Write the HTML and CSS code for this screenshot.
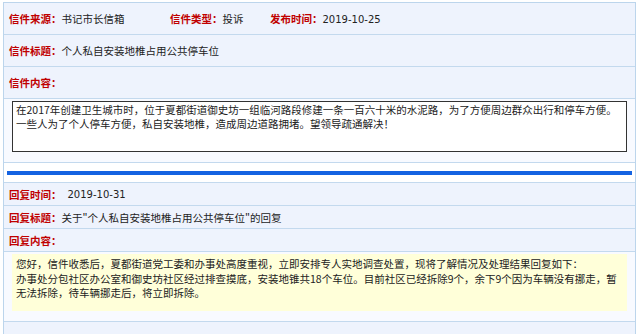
FILE: index.html
```html
<!DOCTYPE html>
<html lang="zh-CN">
<head>
    <meta charset="UTF-8">
    <meta name="viewport" content="width=device-width, initial-scale=1.0">
    <title>信件详情</title>
    <link rel="stylesheet" href="styles.css">
</head>
<body>
    <div class="letter">
        <div class="row row-head">
            <div class="field field-source"><span class="label">信件来源：</span>书记市长信箱</div>
            <div class="field field-type"><span class="label">信件类型：</span>投诉</div>
            <div class="field"><span class="label">发布时间：</span><span class="num">2019-10-25</span></div>
        </div>
        <div class="row row-head">
            <span class="label">信件标题：</span>个人私自安装地椎占用公共停车位
        </div>
        <div class="row row-head">
            <span class="label">信件内容：</span>
        </div>
        <div class="row row-body">
            <div class="content-box">在2017年创建卫生城市时，位于夏都街道御史坊一组临河路段修建一条一百六十米的水泥路，为了方便周边群众出行和停车方便。<br>一些人为了个人停车方便，私自安装地椎，造成周边道路拥堵。望领导疏通解决！</div>
        </div>
        <div class="divider"><div class="bar"></div></div>
        <div class="row row-reply">
            <span class="label">回复时间：</span><span class="num reply-date">2019-10-31</span>
        </div>
        <div class="row row-reply">
            <span class="label">回复标题：</span>关于"个人私自安装地椎占用公共停车位"的回复
        </div>
        <div class="row row-reply">
            <span class="label">回复内容：</span>
        </div>
        <div class="row row-body">
            <div class="reply-box">您好，信件收悉后，夏都街道党工委和办事处高度重视，立即安排专人实地调查处置，现将了解情况及处理结果回复如下：<br>办事处分包社区办公室和御史坊社区经过排查摸底，安装地锥共18个车位。目前社区已经拆除9个，余下9个因为车辆没有挪走，暂<br>无法拆除，待车辆挪走后，将立即拆除。</div>
        </div>
        <div class="row row-foot"></div>
    </div>
</body>
</html>
```

FILE: styles.css
```css
body {
    margin: 0;
    padding: 0;
    background-color: #ffffff;
    font-family: "Noto Sans CJK SC", sans-serif;
    font-size: 10.5px;
    color: #222;
}
.letter {
    margin: 2px 4px 0 3px;
    border: 1px solid #bcd5ec;
    border-bottom: none;
}
.row {
    display: flex;
    align-items: center;
    padding: 0 5px;
    border-bottom: 1px solid #c3d9ee;
    background-color: #eef3fd;
}
.row-head {
    height: 31px;
}
.row-reply {
    height: 22px;
}
.row-body {
    display: block;
    padding: 2px 8px 10px 8px;
    background-color: #f8faff;
}
.row-foot {
    height: 14px;
    border-bottom: none;
}
.field-source {
    width: 161px;
}
.field-type {
    width: 100px;
}
.label {
    color: #c00000;
    font-weight: bold;
}
.num {
    font-family: "DejaVu Sans", sans-serif;
    font-size: 10px;
}
.reply-date {
    margin-left: 6px;
}
.content-box {
    height: 47px;
    padding: 1px 3px;
    background-color: #ffffff;
    border: 1px solid #333;
    line-height: 14px;
    white-space: nowrap;
}
.reply-box {
    height: 53px;
    padding: 3px 4px 1px 4px;
    background-color: #ffffd9;
    line-height: 14.5px;
    white-space: nowrap;
}
.row-body:last-of-type {
    padding-bottom: 4px;
}
.divider {
    height: 20px;
    padding: 8px 3px 0 3px;
    box-sizing: border-box;
    background-color: #ffffff;
    border-bottom: 1px solid #c3d9ee;
}
.bar {
    height: 4px;
    background-color: #1463e2;
}
```
